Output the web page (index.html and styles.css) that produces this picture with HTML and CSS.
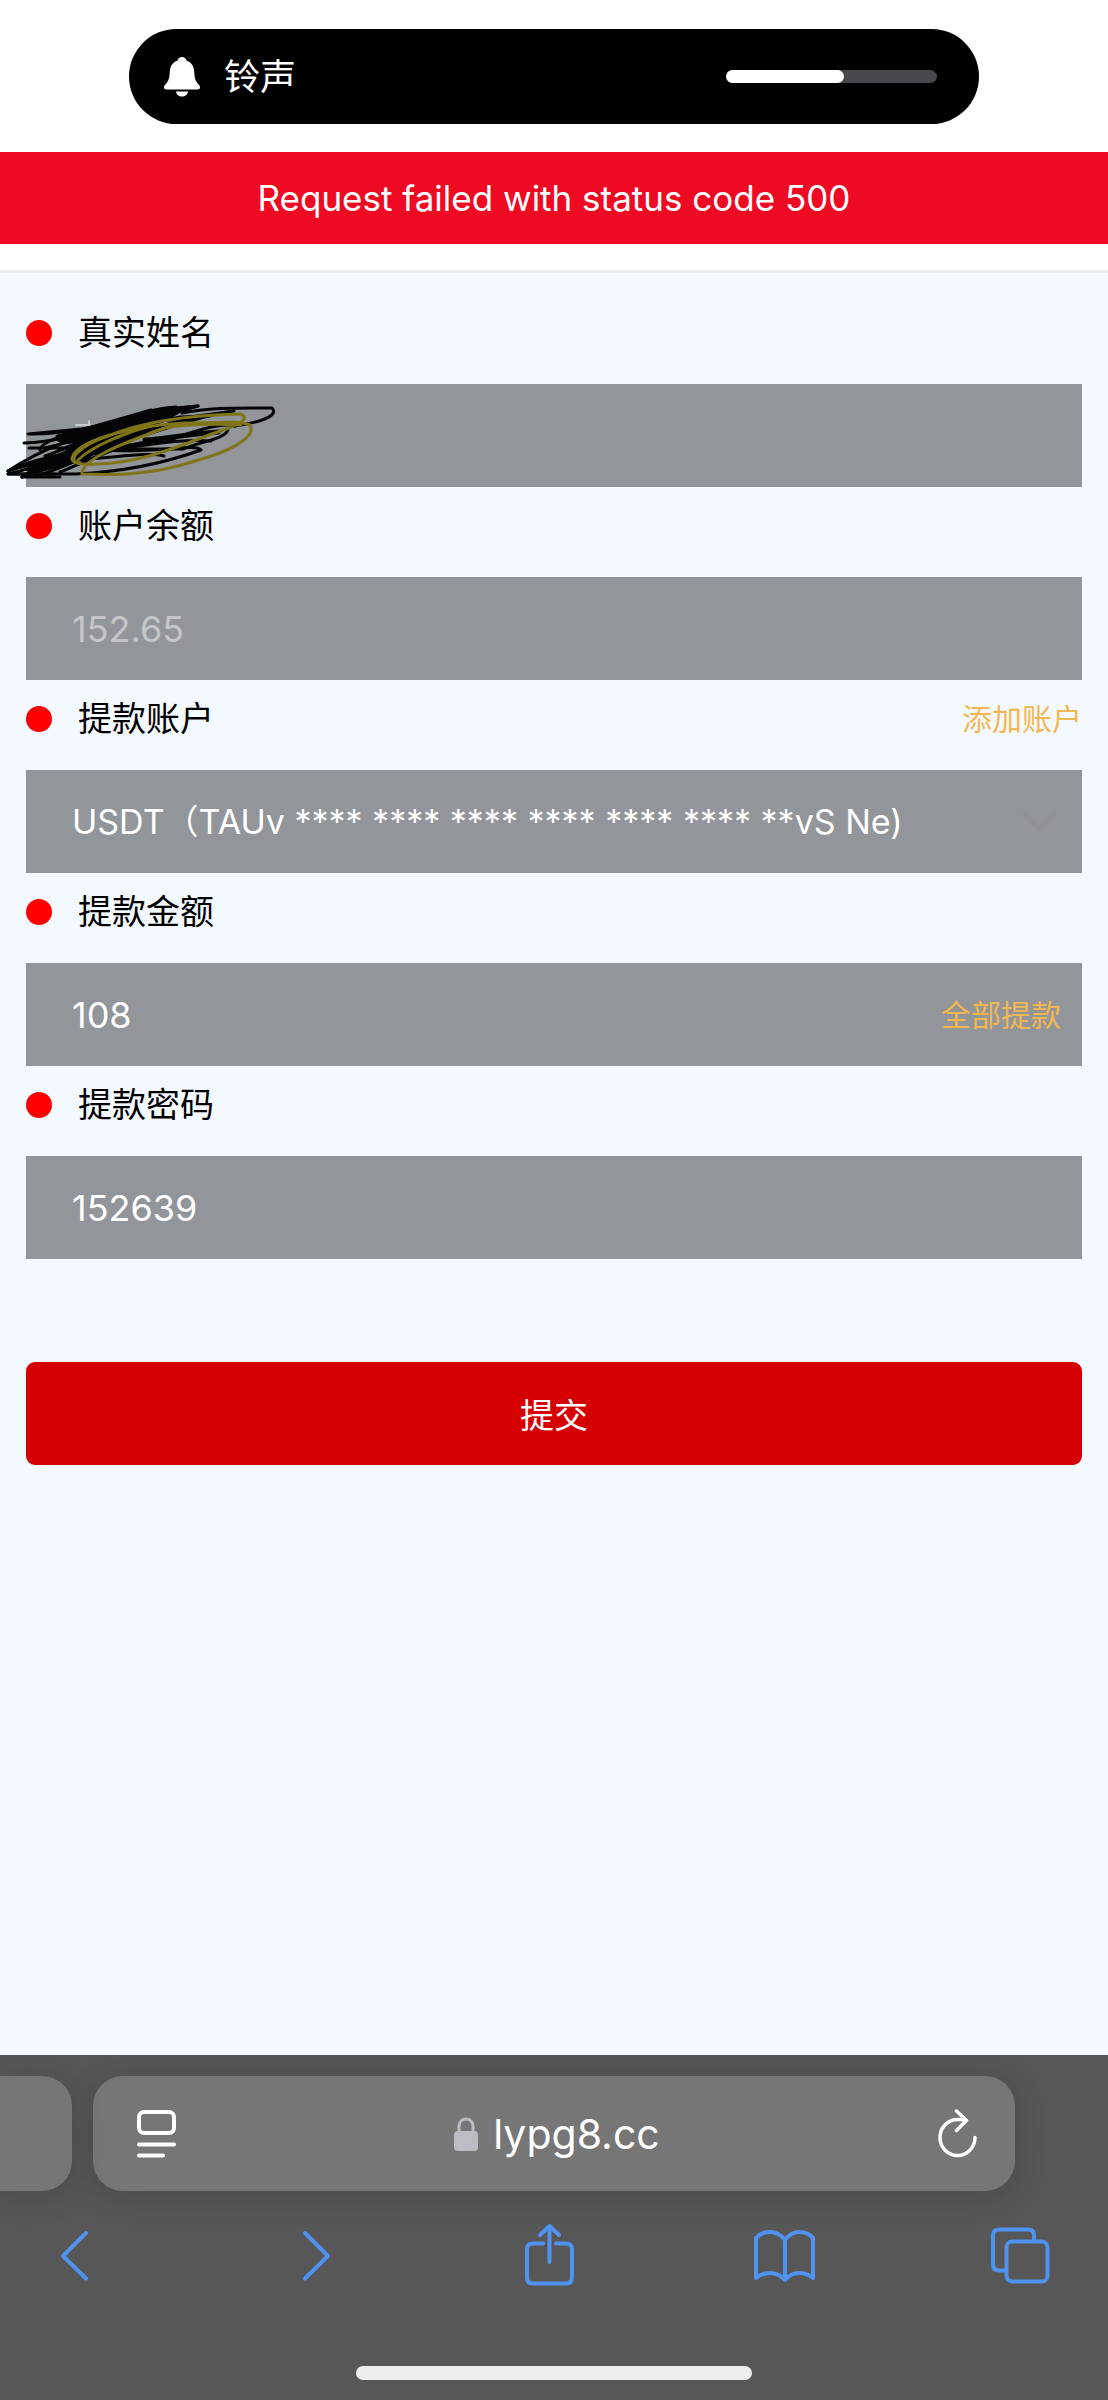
FILE: index.html
```html
<!DOCTYPE html>
<html lang="zh-CN">
<head>
<meta charset="utf-8">
<meta name="viewport" content="width=device-width, initial-scale=1">
<title>提款</title>
<link rel="stylesheet" href="styles.css">
</head>
<body>
<div class="screen">
  <header class="status">
    <div class="island">
      <svg class="bell" width="36" height="40" viewBox="0 0 36 40" aria-hidden="true">
        <path d="M18 0c-2.300 0-4 1.400-4.500 3.400C8.500 5 6 9.500 5.800 14.500c-.3 7-1.300 9.500-4 12.500C.5 28.400 0 29.300 0 30.300 0 31.700 1 32.500 2.600 32.500h30.800c1.600 0 2.600-.8 2.600-2.200 0-1-.5-1.900-1.800-3.300-2.700-3-3.700-5.500-4-12.500C30 9.500 27.500 5 22.500 3.400 22 1.400 20.300 0 18 0z"/>
        <path d="M12 34.500h12c-.3 3-2.800 5-6 5s-5.700-2-6-5z"/>
      </svg>
      <span class="island-label">铃声</span>
      <div class="volume" role="meter" aria-label="铃声" aria-valuemin="0" aria-valuemax="100" aria-valuenow="56"><div class="volume-fill" style="width:56%"></div></div>
    </div>
  </header>
  <div class="notice" role="alert">Request failed with status code 500</div>

  <main class="content">
    <form class="form">
      <div class="label-row"><label class="label" for="name">真实姓名</label></div>
      <div class="field">
        <input class="input" id="name" type="text" readonly>
        <svg class="scribble" width="290" height="100" viewBox="0 0 290 100" fill="none" stroke-linecap="round" stroke-linejoin="round" aria-hidden="true">
          <g stroke="#c8c9cb" stroke-width="2"><path d="M76 35h14M89 31v4M76 52l5-1"/></g>
          <g stroke="#050507" stroke-width="3">
            <path d="M28 44C60 45 90 37 125 31C150 20 170 18 198 16L150 30L92 38L28 44"/>
            <path d="M24 53C60 52 95 40 140 28C155 18 170 17 180 19C150 36 80 48 45 58"/>
            <path d="M29 58L75 58C100 44 130 26 151 20C125 30 90 50 45 66"/>
            <path d="M40 60C40 50 80 40 110 33C130 28 150 18 176 17C150 34 80 60 8 81"/>
            <path d="M8 81C40 60 80 44 125 36L234 21C200 24 140 50 8 84L55 84"/>
            <path d="M22 87C60 60 110 40 180 27L210 26C150 30 90 70 36 86"/>
            <path d="M182 23C210 17 240 18 272 18C278 24 268 31 235 36"/>
            <path d="M235 36C222 32 190 42 165 52C130 48 90 70 60 82"/>
            <path d="M228 39C228 48 200 52 183 59H120C90 60 60 70 22 87H60"/>
            <path d="M211 51C180 48 130 56 72 68L15 78"/>
            <path d="M8 84H75C120 82 165 73 201 60C195 53 155 64 100 60L40 78"/>
            <path d="M164 66C145 61 105 70 60 70C85 48 125 48 160 36"/>
            <path d="M53 57C80 46 110 39 160 31L63 53L145 43L82 60L155 53"/>
            <path d="M75 52C105 42 130 32 177 23C145 43 100 48 70 65L130 55"/>
            <path d="M8 81C20 74 50 66 75 62M22 87C45 78 70 74 90 66M150 22L198 16M140 28L182 18"/>
          </g>
          <g stroke="#050507" stroke-width="5">
            <path d="M60 50C90 46 120 34 153 27M67 58C95 48 130 37 170 24M58 47L92 38L148 22"/>
            <path d="M38 72C70 65 90 57 130 50M30 81L75 67M145 50C160 50 177 45 218 42M50 70L82 58M135 32L178 21"/>
          </g>
          <g stroke="#807619" stroke-width="3">
            <path d="M80 73C65 72 78 56 108 46C145 31 190 25 240 24C251 28 240 34 223 40C185 53 145 73 98 74C83 75 71 74 72 68C76 52 125 36 185 33C217 33 238 30 250 35C258 48 225 63 195 71C150 86 110 85 82 84C81 70 120 54 165 38C190 33 219 34 241 35"/>
            <path d="M78 70C90 58 120 44 151 36"/>
          </g>
        </svg>
      </div>

      <div class="label-row"><label class="label" for="balance">账户余额</label></div>
      <div class="field"><input class="input" id="balance" type="text" placeholder="152.65" readonly></div>

      <div class="label-row"><label class="label" for="account">提款账户</label><a class="link" href="#add">添加账户</a></div>
      <div class="field">
        <select class="input select" id="account"><option>USDT（TAUv **** **** **** **** **** **** **vS Ne)</option></select>
        <svg class="chevron" width="36" height="20" viewBox="0 0 36 20" aria-hidden="true"><path d="M2 2l16 15L34 2" fill="none" stroke="#909296" stroke-width="4"/></svg>
      </div>

      <div class="label-row"><label class="label" for="amount">提款金额</label></div>
      <div class="field"><input class="input" id="amount" type="text" value="108"><button class="link all" type="button">全部提款</button></div>

      <div class="label-row"><label class="label" for="password">提款密码</label></div>
      <div class="field"><input class="input" id="password" type="text" value="152639"></div>

      <button class="submit" type="button">提交</button>
    </form>
  </main>

  <footer class="browser">
    <div class="tabs">
      <div class="tab-peek"></div>
      <div class="address">
        <button class="icon-button" type="button" aria-label="页面设置">
          <svg width="40" height="50" viewBox="0 0 40 50" fill="none" stroke="#fff" stroke-width="4" stroke-linecap="round"><rect x="3" y="3" width="35" height="21" rx="5"/><path d="M3 35.500h35M3 46.500h24"/></svg>
        </button>
        <a class="site" href="#site">
          <svg width="24" height="34" viewBox="0 0 24 34" aria-hidden="true"><rect y="14" width="24" height="20" rx="4" fill="#bdbcc4"/><path d="M5 15V9.500C5 4.700 8 2 12 2s7 2.700 7 7.500V15" fill="none" stroke="#bdbcc4" stroke-width="3"/></svg>
          <span>lypg8.cc</span>
        </a>
        <button class="icon-button" type="button" aria-label="刷新">
          <svg width="40" height="50" viewBox="0 0 40 50" fill="none" stroke="#fff" stroke-width="3.500" stroke-linecap="round" stroke-linejoin="round"><path d="M37 28.500A17.500 18 0 1 1 19.500 10.500Q25 10.300 28 11.500M18.500 2L28.500 11.500L18.500 21.500"/></svg>
        </button>
      </div>
    </div>
    <nav class="nav" aria-label="浏览器">
      <button class="icon-button" type="button" aria-label="后退"><svg class="nav-icon" viewBox="0 0 60 64"><path d="M41 10L18 33L41 55.500"/></svg></button>
      <button class="icon-button" type="button" aria-label="前进"><svg class="nav-icon" viewBox="0 0 60 64"><path d="M24 10L47 33L24 55.500"/></svg></button>
      <button class="icon-button" type="button" aria-label="分享"><svg class="nav-icon" viewBox="0 0 60 64"><path d="M25 20.500H15Q9 20.500 9 26.500V54.500Q9 60.500 15 60.500H48Q54 60.500 54 54.500V26.500Q54 20.500 48 20.500H38M31.500 39V3M22 12L31.500 3L41 12"/></svg></button>
      <button class="icon-button" type="button" aria-label="书签"><svg class="nav-icon" viewBox="0 0 60 64"><path d="M31 17Q25 9 16 9Q7 9 2 15V55Q8 50 16 50Q25 50 31 57Q37 50 45 50Q53 50 59 55V15Q54 9 45 9Q37 9 31 17V57"/></svg></button>
      <button class="icon-button" type="button" aria-label="标签页"><svg class="nav-icon" viewBox="0 0 60 64"><rect x="16.500" y="18.500" width="41" height="40" rx="6"/><path d="M16 47.500H9Q3 47.500 3 41.500V12.500Q3 6.500 9 6.500H38Q44 6.500 44 12.500V18"/></svg></button>
    </nav>
    <div class="home-bar"></div>
  </footer>
</div>
</body>
</html>
```

FILE: styles.css
```css
* {
  box-sizing: border-box;
}

body {
  margin: 0;
  font-family: Inter, "Noto Sans CJK SC", sans-serif;
  background: #fff;
}

button,
input,
select {
  font-family: inherit;
}

button {
  padding: 0;
  border: 0;
  background: none;
  cursor: pointer;
}

.screen {
  display: flex;
  flex-direction: column;
  min-height: 100vh;
}

/* Status area */
.status {
  padding: 29px 129px 28px;
}

.island {
  display: flex;
  align-items: center;
  height: 95px;
  padding: 0 42px 0 35px;
  border-radius: 48px;
  background: #000;
  color: #fff;
}

.bell {
  fill: #fff;
}

.island-label {
  margin-left: 24px;
  font-size: 36px;
  line-height: 44px;
}

.volume {
  width: 211px;
  height: 13px;
  margin-left: auto;
  border-radius: 7px;
  background: #48474c;
  overflow: hidden;
}

.volume-fill {
  height: 100%;
  border-radius: 0 7px 7px 0;
  background: #fff;
}

.notice {
  padding: 24px;
  background: #ef0a24;
  color: #fff;
  font-size: 35px;
  line-height: 44px;
  text-align: center;
}

/* Withdrawal form */
.content {
  flex: 1;
  margin-top: 26px;
  border-top: 3px solid #efeff0;
  background: #f4f8ff;
}

.form {
  padding: 21px 26px 40px;
}

.label-row {
  display: flex;
  align-items: center;
  justify-content: space-between;
  height: 78px;
  margin-bottom: 12px;
}

.label {
  display: flex;
  align-items: center;
  gap: 26px;
  color: #000;
  font-size: 34px;
  line-height: 44px;
}

.label::before {
  content: "";
  width: 26px;
  height: 26px;
  border-radius: 50%;
  background: #f00;
}

.link {
  color: #f2b84f;
  font-size: 30px;
  line-height: 44px;
  text-decoration: none;
}

.field {
  position: relative;
  display: flex;
  align-items: center;
  height: 103px;
  background: #929599;
}

.input {
  flex: 1;
  min-width: 0;
  height: 100%;
  padding: 0 46px;
  border: 0;
  border-radius: 0;
  outline: 0;
  appearance: none;
  background: transparent;
  color: #fff;
  font-size: 36px;
}

.input::placeholder {
  color: #c4c6ca;
  opacity: 1;
}

.select {
  font-size: 34px;
}

.scribble {
  position: absolute;
  top: 6px;
  left: -26px;
}

.chevron {
  margin-right: 25px;
}

.all {
  margin-right: 21px;
}

.submit {
  display: block;
  width: 100%;
  height: 103px;
  margin-top: 103px;
  border-radius: 9px;
  background: #d50002;
  color: #fff;
  font-size: 34px;
}

/* Browser bar */
.browser {
  padding: 21px 0 20px;
  background: #575757;
}

.tabs {
  display: flex;
  gap: 21px;
  padding-right: 93px;
}

.tab-peek,
.address {
  height: 115px;
  background: #767676;
  box-shadow: 0 4px 32px rgba(0, 0, 0, 0.16);
}

.tab-peek {
  position: relative;
  z-index: 1;
  width: 72px;
  border-radius: 0 30px 30px 0;
}

.address {
  flex: 1;
  display: flex;
  align-items: center;
  justify-content: space-between;
  padding: 0 37px 0 43px;
  border-radius: 30px;
}

.site {
  display: flex;
  align-items: center;
  gap: 15px;
  color: #fff;
  font-size: 41px;
  line-height: 48px;
  text-decoration: none;
}

.icon-button svg {
  display: block;
}

.nav {
  display: flex;
  justify-content: space-between;
  padding: 32px 58px 0 45px;
}

.nav-icon {
  width: 60px;
  height: 64px;
  overflow: visible;
  fill: none;
  stroke: #4f92f0;
  stroke-width: 4;
  stroke-linecap: round;
  stroke-linejoin: round;
}

.home-bar {
  width: 396px;
  height: 14px;
  margin: 79px auto 0;
  border-radius: 7px;
  background: #eee;
}
```
